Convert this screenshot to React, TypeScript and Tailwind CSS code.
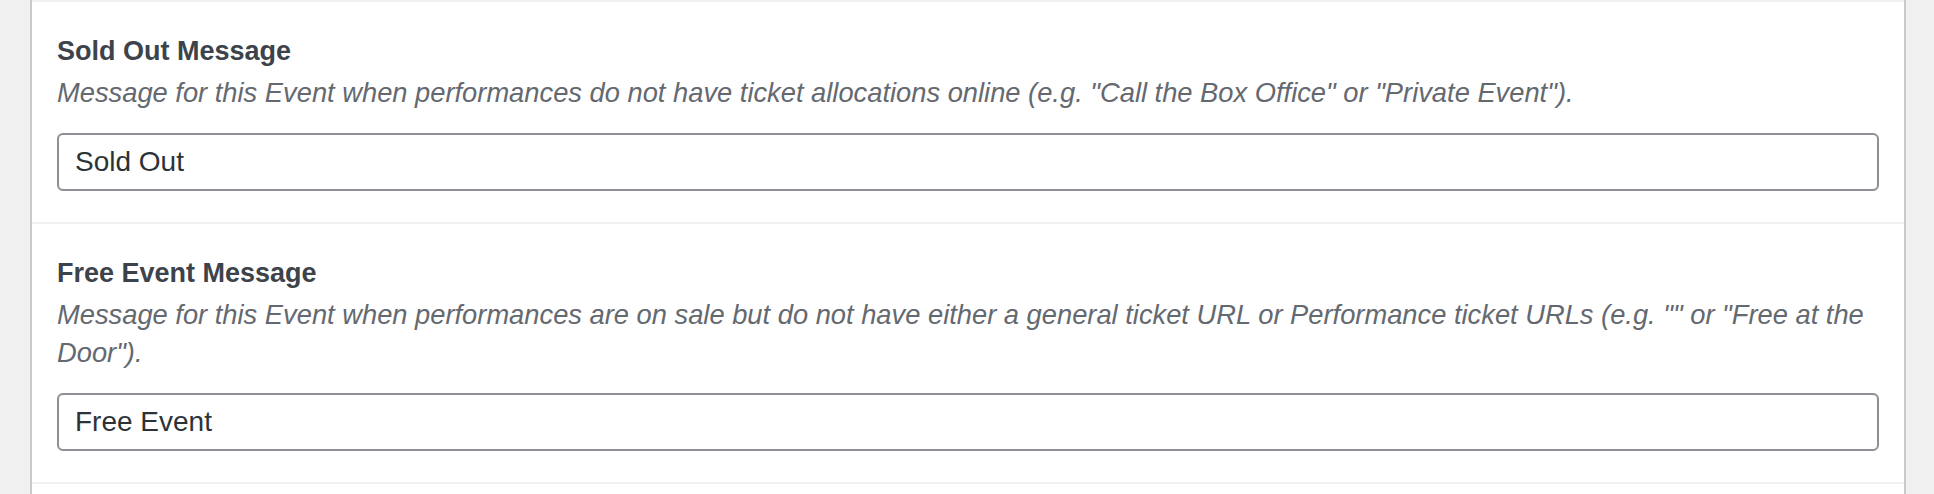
import React from 'react';

type Field = {
    id: string;
    label: string;
    description: string;
    value: string;
};

const fields: Field[] = [
    {
        id: 'sold_out_message',
        label: 'Sold Out Message',
        description:
            'Message for this Event when performances do not have ticket allocations online (e.g. "Call the Box Office" or "Private Event").',
        value: 'Sold Out',
    },
    {
        id: 'free_event_message',
        label: 'Free Event Message',
        description:
            'Message for this Event when performances are on sale but do not have either a general ticket URL or Performance ticket URLs (e.g. "" or "Free at the Door").',
        value: 'Free Event',
    },
];

const FieldRow = ({ field }: { field: Field }) => {
    return (
        <div className="border-b-2 border-[#f0f0f1] px-[25px] pt-[30px] pb-[31px]">
            <label htmlFor={field.id} className="block mb-[4px] text-[27px] leading-[38px] font-bold text-[#3c434a]">
                {field.label}
            </label>
            <p className="mb-[21px] text-[27.3px] leading-[38px] italic text-[#646970]">{field.description}</p>
            <input
                id={field.id}
                type="text"
                defaultValue={field.value}
                className="block w-full h-[58px] px-[16px] rounded-[6px] border-2 border-[#8c8f94] bg-white text-[28px] text-[#2c3338] outline-none"
                style={{ fontFamily: 'inherit' }}
            />
        </div>
    );
};

export default function App() {
    return (
        <div
            className="flex h-[494px] w-full bg-[#f0f0f1] overflow-hidden"
            style={{ fontFamily: '"Liberation Sans", Arial, sans-serif' }}
        >
            <div className="ml-[30px] w-[1876px] shrink-0 bg-white border-x-2 border-[#c9cacd]">
                <div className="border-t-2 border-[#f0f0f1]">
                    {fields.map((f) => (
                        <FieldRow key={f.id} field={f} />
                    ))}
                </div>
            </div>
        </div>
    );
}
